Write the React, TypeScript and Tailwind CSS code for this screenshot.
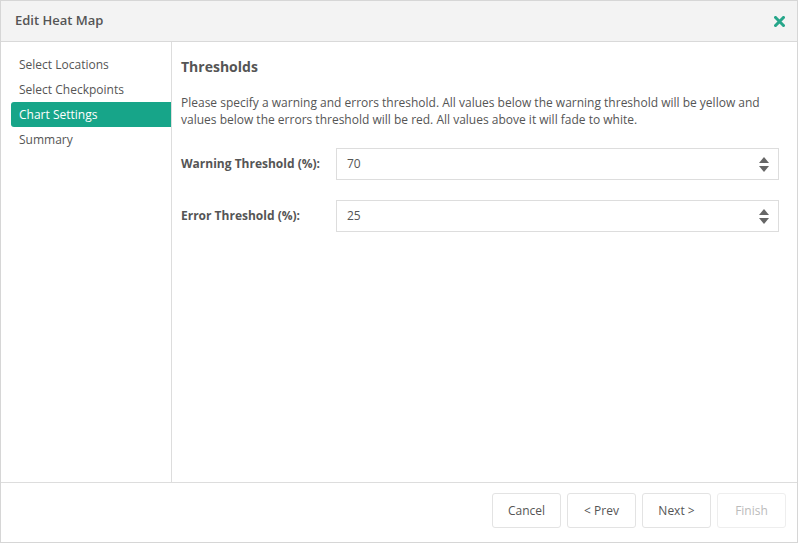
import { useState } from 'react';

const steps = ['Select Locations', 'Select Checkpoints', 'Chart Settings', 'Summary'];

const Spinner = () => (
  <div className="flex flex-col items-center gap-[3px] pr-[3px]">
    <svg width="10" height="6" viewBox="0 0 10 6">
      <path d="M5 0 L10 6 L0 6 Z" fill="#666" />
    </svg>
    <svg width="10" height="6" viewBox="0 0 10 6">
      <path d="M0 0 L10 0 L5 6 Z" fill="#666" />
    </svg>
  </div>
);

const NumberField = ({ label, value }: { label: string; value: string }) => (
  <div className="flex items-center">
    <label className="w-[155px] shrink-0 text-[12px] font-bold text-[#555]">{label}</label>
    <div className="flex h-[32px] w-[443px] items-center justify-between border border-[#dddddd] bg-white pl-[10px] pr-[6px]">
      <span className="text-[12px] text-[#555]">{value}</span>
      <Spinner />
    </div>
  </div>
);

export default function App() {
  const [active] = useState(2);

  return (
    <div
      className="flex h-[543px] w-[798px] flex-col border border-[#d6d6d6] bg-white text-[#555]"
      style={{ fontFamily: '"Open Sans", "Noto Sans", sans-serif' }}
    >
      <div className="flex h-[41px] shrink-0 items-center justify-between border-b border-[#d9d9d9] bg-[#f3f3f3] pl-[14px] pr-[12px]">
        <h1 className="text-[13px] font-semibold text-[#555]">Edit Heat Map</h1>
        <svg width="11" height="11" viewBox="0 0 11 11">
          <path d="M1.5 1.5 L9.5 9.5 M9.5 1.5 L1.5 9.5" stroke="#26a68a" strokeWidth="3" strokeLinecap="square" />
        </svg>
      </div>

      <div className="flex flex-1">
        <div className="w-[171px] shrink-0 border-r border-[#dddddd] pt-[10px] pl-[10px]">
          {steps.map((s, i) => (
            <div
              key={s}
              className={
                i === active
                  ? 'flex h-[25px] items-center rounded-l-[3px] bg-[#17a589] pl-[8px] text-[12px] text-white'
                  : 'flex h-[25px] items-center pl-[8px] text-[12px] text-[#555]'
              }
            >
              {s}
            </div>
          ))}
        </div>

        <div className="flex-1 pl-[9px] pr-[18px] pt-[15px]">
          <h2 className="text-[14px] font-bold leading-[20px] text-[#555]">Thresholds</h2>
          <p className="mt-[17px] text-[12px] leading-[17px] text-[#555]">
            Please specify a warning and errors threshold. All values below the warning threshold will be yellow and
            values below the errors threshold will be red. All values above it will fade to white.
          </p>
          <div className="mt-[20px] flex flex-col gap-[20px]">
            <NumberField label="Warning Threshold (%):" value="70" />
            <NumberField label="Error Threshold (%):" value="25" />
          </div>
        </div>
      </div>

      <div className="flex h-[60px] shrink-0 items-start justify-end gap-[6px] border-t border-[#dddddd] pt-[10px] pr-[11px]">
        <button className="h-[35px] w-[69px] rounded-[3px] border border-[#e3e3e3] bg-white text-[12px] text-[#555]">Cancel</button>
        <button className="h-[35px] w-[69px] rounded-[3px] border border-[#e3e3e3] bg-white text-[12px] text-[#555]">&lt; Prev</button>
        <button className="h-[35px] w-[69px] rounded-[3px] border border-[#e3e3e3] bg-white text-[12px] text-[#555]">Next &gt;</button>
        <button className="h-[35px] w-[69px] rounded-[3px] border border-[#eeeeee] bg-white text-[12px] text-[#bbb]">Finish</button>
      </div>
    </div>
  );
}
